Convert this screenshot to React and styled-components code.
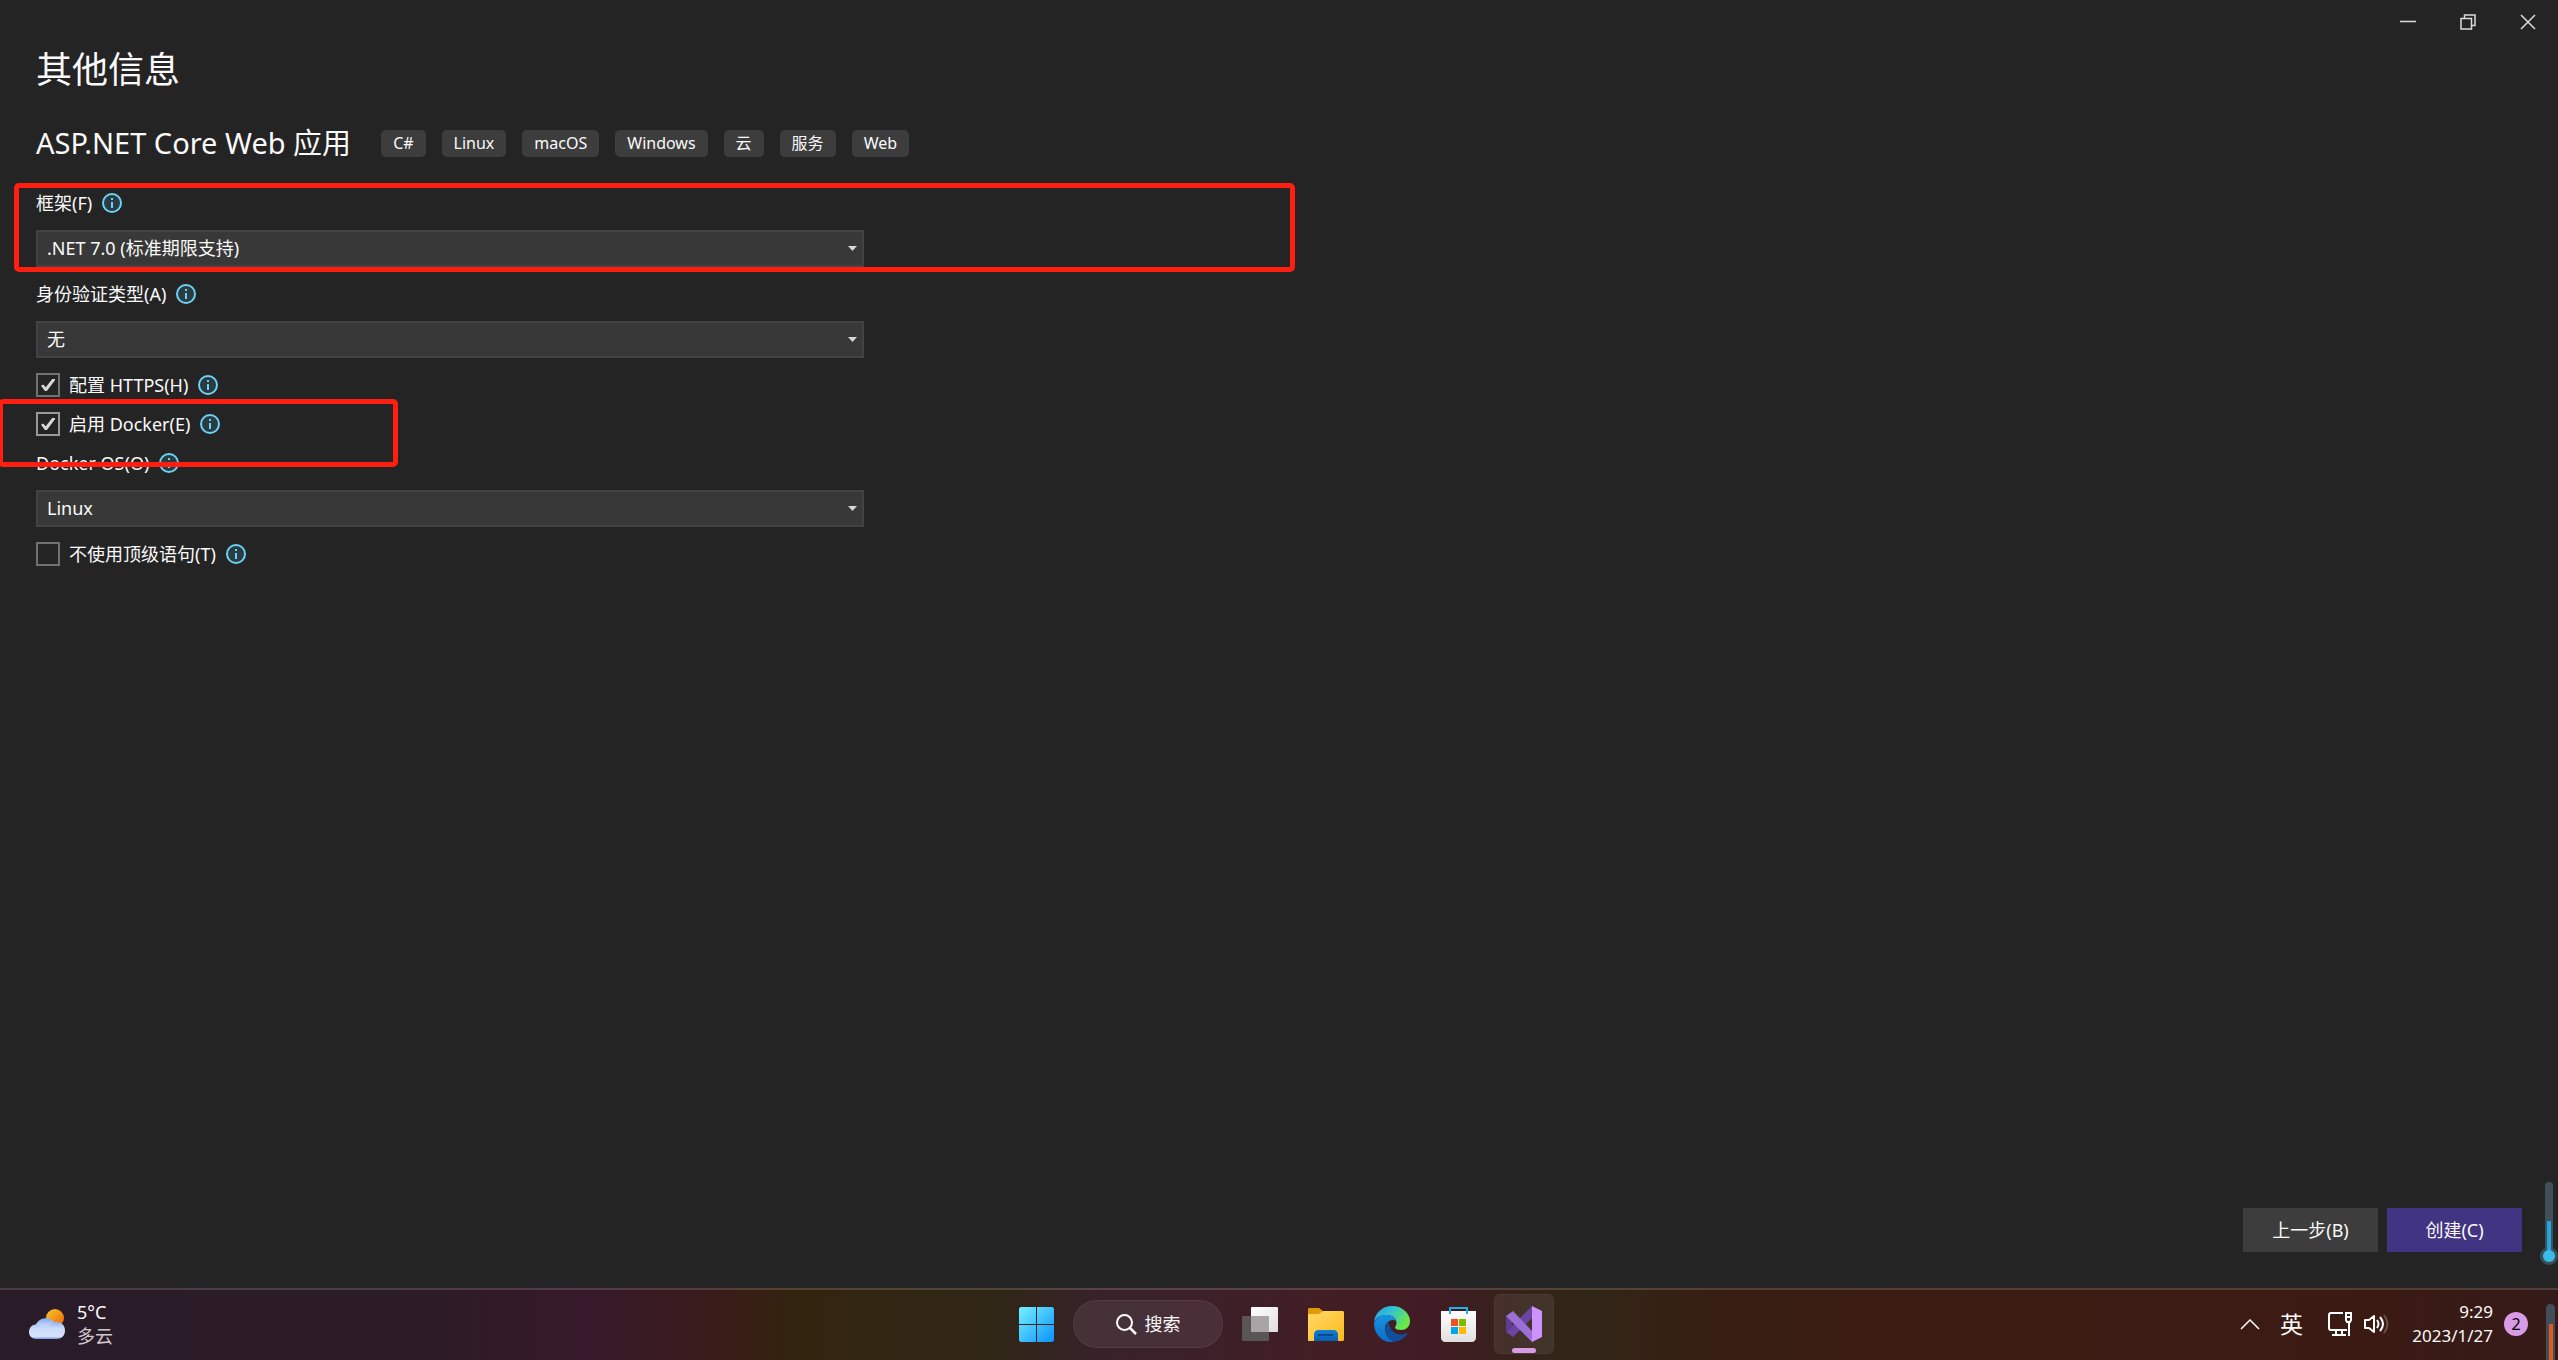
import React, { useState } from "react";
import styled, { createGlobalStyle } from "styled-components";

const GlobalStyle = createGlobalStyle`
  * {
    box-sizing: border-box;
  }
  body {
    margin: 0;
    background: #242424;
    overflow: hidden;
  }
  button, select, input {
    font: inherit;
    color: inherit;
  }
`;

const Desktop = styled.div`
  position: relative;
  display: flex;
  flex-direction: column;
  min-height: 100vh;
  color: #fafafa;
  background: #242424;
  font-family: "Noto Sans", "Noto Sans CJK SC", sans-serif;
  font-size: 18px;
  line-height: 24px;
`;

const TitleBar = styled.header`
  display: flex;
  justify-content: flex-end;
  height: 46px;
`;

const CaptionButton = styled.button`
  display: flex;
  align-items: center;
  justify-content: center;
  width: 60px;
  height: 44px;
  padding: 0;
  border: none;
  background: transparent;
`;

const Content = styled.main`
  flex: 1;
  padding: 0 36px;
`;

const Title = styled.h1`
  margin: 0;
  font-size: 36px;
  line-height: 48px;
  font-weight: 400;
`;

const Template = styled.div`
  display: flex;
  align-items: center;
  gap: 30px;
  margin: 29px 0 28px;
`;

const TemplateName = styled.h2`
  margin: 0;
  font-size: 29px;
  line-height: 40px;
  font-weight: 400;
`;

const Tags = styled.ul`
  display: flex;
  gap: 16px;
  margin: 0;
  padding: 0;
  list-style: none;
`;

const Tag = styled.li`
  padding: 0 12px;
  border-radius: 5px;
  background: #3d3d3d;
  font-size: 16px;
  line-height: 27px;
`;

const Form = styled.form`
  display: flex;
  flex-direction: column;
  gap: 15px;
  max-width: 828px;
`;

const Field = styled.div`
  position: relative;
  display: flex;
  flex-direction: column;
  gap: 15px;
`;

const LabelRow = styled.div`
  position: relative;
  display: flex;
  align-items: center;
  gap: 9px;
  height: 24px;

  svg {
    margin-left: 1px;
  }
`;

const SelectBox = styled.div`
  position: relative;
  display: flex;

  svg {
    position: absolute;
    top: 16px;
    right: 7px;
    pointer-events: none;
  }
`;

const Select = styled.select`
  appearance: none;
  width: 100%;
  height: 37px;
  padding: 0 30px 1px 9px;
  border: 2px solid #434343;
  border-radius: 0;
  outline: 0;
  background: #383838;
`;

const Checkbox = styled.input`
  appearance: none;
  display: grid;
  place-items: center;
  width: 24px;
  height: 24px;
  margin: 0;
  border: 2px solid ${(props) => (props.$active ? "#999999" : "#717171")};

  &:checked::before {
    content: "";
    width: 14px;
    height: 12px;
    background: #d6d6d6;
    clip-path: polygon(0 56%, 16% 46%, 34% 68%, 80% 0, 100% 0, 100% 10%, 42% 100%, 28% 100%);
  }
`;

const Highlight = styled.div`
  position: absolute;
  top: ${(props) => props.$top}px;
  left: ${(props) => props.$left}px;
  width: ${(props) => props.$width}px;
  height: ${(props) => props.$height}px;
  border: 5px solid #ff1e10;
  border-radius: 5px;
  pointer-events: none;
  z-index: 1;
`;

const Actions = styled.footer`
  display: flex;
  justify-content: flex-end;
  gap: 9px;
  padding: 36px;
`;

const ActionButton = styled.button`
  width: 135px;
  height: 44px;
  padding: 0;
  border: none;
  background: ${(props) => (props.$primary ? "#413482" : "#3d3d3d")};
`;

const Taskbar = styled.nav`
  display: grid;
  grid-template-columns: 1fr auto 1fr;
  align-items: center;
  height: 72px;
  padding: 0 0 2px 2px;
  border-top: 2px solid rgba(255, 255, 255, 0.15);
  background: linear-gradient(
    90deg,
    #2a1b29 0%,
    #2b1c27 15%,
    #36192a 23%,
    #3a1b1a 28%,
    #33240f 31%,
    #302616 39%,
    #38222a 43%,
    #3c2029 47%,
    #431d24 52%,
    #411c24 56%,
    #36221b 59%,
    #312617 62%,
    #371e13 67%,
    #3b1b12 75%,
    #3b1a13 93%,
    #341b19 100%
  );
`;

const Weather = styled.button`
  display: flex;
  align-items: center;
  justify-self: start;
  gap: 12px;
  margin-left: 27px;
  padding: 0;
  border: none;
  background: transparent;
  text-align: left;
`;

const Lines = styled.span`
  display: flex;
  flex-direction: column;
  padding-bottom: 1px;
`;

const Muted = styled.span`
  color: #cfc8cd;
`;

const Apps = styled.div`
  display: flex;
  align-items: center;
  gap: 6px;
`;

const AppButton = styled.button`
  position: relative;
  display: flex;
  align-items: center;
  justify-content: center;
  width: 60px;
  height: 60px;
  padding: 0;
  border: 1px solid ${(props) => (props.$active ? "#4a3b30" : "transparent")};
  border-radius: 6px;
  background: ${(props) => (props.$active ? "rgba(255, 255, 255, 0.07)" : "transparent")};
`;

const ActiveMark = styled.span`
  position: absolute;
  bottom: 0;
  left: 17px;
  width: 24px;
  height: 5px;
  border-radius: 3px;
  background: #d99be6;
`;

const Search = styled.button`
  display: flex;
  align-items: center;
  justify-content: center;
  gap: 8px;
  width: 150px;
  height: 48px;
  margin: 0 1px;
  padding: 0;
  border: 1px solid rgba(255, 255, 255, 0.06);
  border-radius: 24px;
  background: rgba(255, 255, 255, 0.07);
`;

const Tray = styled.div`
  display: flex;
  align-items: center;
  justify-self: end;
  padding-right: 30px;
`;

const TrayButton = styled.button`
  display: flex;
  align-items: center;
  gap: 11px;
  margin-right: ${(props) => props.$gap}px;
  padding: 0;
  border: none;
  background: transparent;
  font-size: 23px;
`;

const Clock = styled.button`
  width: 92px;
  margin-right: 11px;
  padding: 0;
  border: none;
  background: transparent;
  font-size: 17px;
  text-align: right;
  white-space: nowrap;

  ${Lines} {
    align-items: flex-end;
  }
`;

const Badge = styled.span`
  width: 24px;
  height: 24px;
  border-radius: 50%;
  background: #d99be6;
  color: #000000;
  font-size: 16px;
  text-align: center;
`;

const Gauge = styled.svg`
  position: absolute;
  right: 0;
  bottom: ${(props) => props.$bottom}px;
`;

function InfoIcon() {
  return (
    <svg width="20" height="20" viewBox="0 0 20 20" aria-hidden="true">
      <circle cx="10" cy="10" r="9" fill="#2b3b42" stroke="#6bd2f5" strokeWidth="2" />
      <rect x="9" y="5" width="2" height="2" fill="#6bd2f5" />
      <rect x="9" y="9" width="2" height="6" fill="#6bd2f5" />
    </svg>
  );
}

function CloudIcon() {
  return (
    <svg width="36" height="30" viewBox="0 0 36 30" aria-hidden="true">
      <defs>
        <linearGradient id="sun" x1="0" y1="0" x2="1" y2="1">
          <stop offset="0.1" stopColor="#f7bf26" />
          <stop offset="0.9" stopColor="#f06d0c" />
        </linearGradient>
        <linearGradient id="cloudBack" x1="0" y1="0" x2="0" y2="1">
          <stop offset="0" stopColor="#80a8f0" />
          <stop offset="0.5" stopColor="#c3d6f7" />
        </linearGradient>
        <linearGradient id="cloudFront" x1="0" y1="0" x2="0" y2="1">
          <stop offset="0" stopColor="#8fb2f2" />
          <stop offset="0.35" stopColor="#c9daf8" />
          <stop offset="0.85" stopColor="#d5e2fa" />
          <stop offset="1" stopColor="#6f97e4" />
        </linearGradient>
      </defs>
      <circle cx="26" cy="9" r="9" fill="url(#sun)" />
      <path d="M6 18a11 11 0 0 1 21-2l-3 8H6z" fill="url(#cloudBack)" />
      <path
        d="M7 15.500c3 0 5 1 7 2.500 2 1 5 .5 7-2 2-2 4-3 7-3 5 0 8 4 8 8.500S33 30 28 30H7c-4 0-7-3-7-7s3-7.500 7-7.500z"
        fill="url(#cloudFront)"
      />
    </svg>
  );
}

function WindowsIcon() {
  return (
    <svg width="35" height="35" viewBox="0 0 35 35" aria-hidden="true">
      <defs>
        <linearGradient id="win" gradientUnits="userSpaceOnUse" x1="0" y1="0" x2="35" y2="35">
          <stop offset="0" stopColor="#75f0ff" />
          <stop offset="1" stopColor="#0a93fb" />
        </linearGradient>
      </defs>
      <path
        d="M1.500 0H17v17H0V1.500zM18 0h15.500L35 1.500V17H18zM0 18h17v17H1.500L0 33.500zM18 18h17v15.500L33.500 35H18z"
        fill="url(#win)"
      />
    </svg>
  );
}

function SearchIcon() {
  return (
    <svg width="21" height="21" viewBox="0 0 21 21" fill="none" stroke="#fff" aria-hidden="true">
      <circle cx="8.500" cy="8.500" r="7.500" strokeWidth="2" />
      <path d="M14 14l6 6" strokeWidth="2.500" />
    </svg>
  );
}

function TaskViewIcon() {
  return (
    <svg width="36" height="34" viewBox="0 0 36 34" aria-hidden="true">
      <defs>
        <linearGradient id="pane" x1="0" y1="0" x2="1" y2="1">
          <stop offset="0" stopColor="#ffffff" />
          <stop offset="1" stopColor="#dedede" />
        </linearGradient>
      </defs>
      <rect x="0" y="9" width="27" height="25" rx="1" fill="#5a5656" />
      <rect x="9" y="0" width="27" height="25" rx="1" fill="url(#pane)" />
      <rect x="9" y="9" width="18" height="16" fill="#a9a5a6" />
    </svg>
  );
}

function FolderIcon() {
  return (
    <svg width="36" height="33" viewBox="0 0 36 33" aria-hidden="true">
      <defs>
        <linearGradient id="folder" x1="0" y1="0" x2="1" y2="1">
          <stop offset="0" stopColor="#ffd968" />
          <stop offset="1" stopColor="#fcba1c" />
        </linearGradient>
        <linearGradient id="tray" x1="0" y1="0" x2="0" y2="1">
          <stop offset="0" stopColor="#1380d6" />
          <stop offset="1" stopColor="#0a5cab" />
        </linearGradient>
      </defs>
      <path d="M0 1l1-1h10l4 3v5H0z" fill="#e09a08" />
      <path d="M0 6h10c3 0 3-3 6-3h19l1 1v28l-1 1H0z" fill="url(#folder)" />
      <path d="M6 33v-7c0-2 2-4 4-4h16c2 0 4 2 4 4v7z" fill="url(#tray)" />
      <path d="M10 27h15" stroke="#0b4889" strokeWidth="2" />
    </svg>
  );
}

function EdgeIcon() {
  return (
    <svg width="36" height="36" viewBox="0 0 36 36" aria-hidden="true">
      <defs>
        <linearGradient id="edgeTop" x1="0" y1="0" x2="1" y2="0.500">
          <stop offset="0" stopColor="#289fdc" />
          <stop offset="0.45" stopColor="#30c2d6" />
          <stop offset="1" stopColor="#6ce847" />
        </linearGradient>
        <linearGradient id="edgeLeft" x1="0" y1="0" x2="0" y2="1">
          <stop offset="0" stopColor="#1695e0" />
          <stop offset="1" stopColor="#0a6bc7" />
        </linearGradient>
      </defs>
      <path
        d="M0 16C1 7 8 0 18 0c11 0 18 8 18 15 0 6-4 9-9 9-4 0-6-1-6-2.500 0-1 1.500-2 1.500-4.500C22.500 11 17 9 12 9 6 9 2 12 0 16z"
        fill="url(#edgeTop)"
      />
      <path
        d="M0 17C2 12 6 9 12 9c5 0 9 2 10.500 6-6-3-12 2-11.500 8 .5 6 4 11 10 12.700C9 38 0 29 0 17z"
        fill="url(#edgeLeft)"
      />
      <path
        d="M14 16c-5 6-3 17 8 19.600 5-1 9-4 11.500-8 .3-.6-.2-1-.8-.7-5 2.500-10 1.600-13-.9-3.500-3-4.500-6.500-5.700-10z"
        fill="#104f9c"
      />
    </svg>
  );
}

function StoreIcon() {
  return (
    <svg width="35" height="35" viewBox="0 0 35 35" aria-hidden="true">
      <defs>
        <linearGradient id="bag" x1="0" y1="0" x2="0" y2="1">
          <stop offset="0" stopColor="#ffffff" />
          <stop offset="1" stopColor="#dfdfdf" />
        </linearGradient>
      </defs>
      <path d="M0 4h35v27c0 2-2 4-4 4H4c-2 0-4-2-4-4z" fill="url(#bag)" />
      <path d="M9 7V1h17v6" fill="none" stroke="#22aeea" strokeWidth="2" />
      <rect x="10" y="12" width="7" height="7" fill="#f25022" />
      <rect x="18" y="12" width="7" height="7" fill="#7fba00" />
      <rect x="10" y="20" width="7" height="7" fill="#00a4ef" />
      <rect x="18" y="20" width="7" height="7" fill="#ffb900" />
    </svg>
  );
}

function VisualStudioIcon() {
  return (
    <svg width="36" height="36" viewBox="0 0 36 36" aria-hidden="true">
      <path d="M0 26l7 5L26 12V0z" fill="#6b45a2" />
      <path d="M0 10v16l6-5v-6z" fill="#5f3d94" />
      <path d="M0 10l7-5 19 20v11z" fill="#9b6fd4" />
      <path d="M26 0l10 5v26l-10 5z" fill="#cb93fb" />
    </svg>
  );
}

function NetworkIcon() {
  return (
    <svg width="25" height="24" viewBox="0 0 25 24" fill="none" stroke="#fff" strokeWidth="2" aria-hidden="true">
      <path d="M15 1H3a2 2 0 0 0-2 2v13a2 2 0 0 0 2 2h16M4 23h14M8 18v5M14 18v5" />
      <path d="M18 1h5v7l-1 2h-3l-1-2zM17 5h7M21 10v14" />
    </svg>
  );
}

function SpeakerIcon() {
  return (
    <svg width="25" height="20" viewBox="0 0 25 20" fill="none" stroke="#fff" strokeWidth="2" aria-hidden="true">
      <path d="M1 6v8h4l5 4V2L5 6z" strokeLinejoin="round" />
      <path d="M13 6q3 4 0 8M16 3q6 7 0 14" />
      <path d="M20 1q7 9 0 18" stroke="#6b504b" />
    </svg>
  );
}

function InfoSelect({ id, label, options, children }) {
  return (
    <Field>
      <LabelRow>
        <label htmlFor={id}>{label}</label>
        <InfoIcon />
      </LabelRow>
      <SelectBox>
        <Select id={id}>
          {options.map((option) => (
            <option key={option}>{option}</option>
          ))}
        </Select>
        <svg width="9" height="5" viewBox="0 0 9 5" aria-hidden="true">
          <path d="M0 0h9L4.500 5z" fill="#d6d6d6" />
        </svg>
      </SelectBox>
      {children}
    </Field>
  );
}

function InfoCheckbox({ id, label, checked, onChange, active, children }) {
  return (
    <LabelRow>
      <Checkbox type="checkbox" id={id} checked={checked} onChange={onChange} $active={active} />
      <label htmlFor={id}>{label}</label>
      <InfoIcon />
      {children}
    </LabelRow>
  );
}

const tags = ["C#", "Linux", "macOS", "Windows", "云", "服务", "Web"];

function App() {
  const [options, setOptions] = useState({ https: true, docker: true, topLevel: false });

  const toggle = (key) => () => setOptions({ ...options, [key]: !options[key] });

  return (
    <Desktop>
      <GlobalStyle />
      <TitleBar>
        <CaptionButton aria-label="最小化">
          <svg width="16" height="16" viewBox="0 0 16 16">
            <path d="M0 7.500h16" stroke="#dcdcdc" strokeWidth="1.500" />
          </svg>
        </CaptionButton>
        <CaptionButton aria-label="还原">
          <svg width="16" height="16" viewBox="0 0 16 16" fill="none" stroke="#dcdcdc" strokeWidth="1.500">
            <path d="M1 4.500h10.500V15H1zM4.500 4V1H15v10.500h-3" />
          </svg>
        </CaptionButton>
        <CaptionButton aria-label="关闭">
          <svg width="16" height="16" viewBox="0 0 16 16">
            <path d="M1 1l14 14M15 1L1 15" stroke="#dcdcdc" strokeWidth="1.500" />
          </svg>
        </CaptionButton>
      </TitleBar>

      <Content>
        <Title>其他信息</Title>
        <Template>
          <TemplateName>ASP.NET Core Web 应用</TemplateName>
          <Tags>
            {tags.map((tag) => (
              <Tag key={tag}>{tag}</Tag>
            ))}
          </Tags>
        </Template>
        <Form>
          <InfoSelect id="framework" label="框架(F)" options={[".NET 7.0 (标准期限支持)"]}>
            <Highlight $top={-8} $left={-22} $width={1281} $height={89} />
          </InfoSelect>
          <InfoSelect id="auth" label="身份验证类型(A)" options={["无"]} />
          <InfoCheckbox
            id="https"
            label="配置 HTTPS(H)"
            checked={options.https}
            onChange={toggle("https")}
          />
          <InfoCheckbox
            id="docker"
            label="启用 Docker(E)"
            checked={options.docker}
            onChange={toggle("docker")}
            active
          >
            <Highlight $top={-13} $left={-38} $width={400} $height={68} />
          </InfoCheckbox>
          <InfoSelect id="dockerOs" label="Docker OS(O)" options={["Linux", "Windows"]} />
          <InfoCheckbox
            id="topLevel"
            label="不使用顶级语句(T)"
            checked={options.topLevel}
            onChange={toggle("topLevel")}
          />
        </Form>
      </Content>

      <Actions>
        <ActionButton>上一步(B)</ActionButton>
        <ActionButton $primary>创建(C)</ActionButton>
      </Actions>

      <Taskbar>
        <Weather>
          <CloudIcon />
          <Lines>
            <span>5°C</span>
            <Muted>多云</Muted>
          </Lines>
        </Weather>
        <Apps>
          <AppButton aria-label="开始">
            <WindowsIcon />
          </AppButton>
          <Search>
            <SearchIcon />
            搜索
          </Search>
          <AppButton aria-label="任务视图">
            <TaskViewIcon />
          </AppButton>
          <AppButton aria-label="文件资源管理器">
            <FolderIcon />
          </AppButton>
          <AppButton aria-label="Microsoft Edge">
            <EdgeIcon />
          </AppButton>
          <AppButton aria-label="Microsoft Store">
            <StoreIcon />
          </AppButton>
          <AppButton aria-label="Visual Studio" $active>
            <VisualStudioIcon />
            <ActiveMark />
          </AppButton>
        </Apps>
        <Tray>
          <TrayButton aria-label="显示隐藏的图标" $gap={20}>
            <svg width="20" height="11" viewBox="0 0 20 11" fill="none" stroke="#fff">
              <path d="M1 10l9-9 9 9" strokeWidth="1.500" />
            </svg>
          </TrayButton>
          <TrayButton $gap={25}>英</TrayButton>
          <TrayButton aria-label="网络和音量" $gap={12}>
            <NetworkIcon />
            <SpeakerIcon />
          </TrayButton>
          <Clock>
            <Lines>
              <span>9:29</span>
              <span>2023/1/27</span>
            </Lines>
          </Clock>
          <Badge>2</Badge>
        </Tray>
      </Taskbar>

      <Gauge width="18" height="83" viewBox="0 0 18 83" $bottom={95} aria-hidden="true">
        <rect x="5" y="0" width="8" height="74" rx="4" fill="#40505b" />
        <circle cx="9" cy="74" r="9" fill="#35505e" />
        <rect x="7" y="39" width="4" height="34" fill="#1fa5e0" />
        <circle cx="9" cy="74" r="6" fill="#3cbbe8" />
      </Gauge>
      <Gauge width="12" height="56" viewBox="0 0 12 56" $bottom={0} aria-hidden="true">
        <path d="M0 56V5q0-5 4.500-5T9 5v51z" fill="#434d57" />
        <rect x="3" y="20" width="4" height="36" fill="#dd5a20" />
      </Gauge>
    </Desktop>
  );
}

export default App;
